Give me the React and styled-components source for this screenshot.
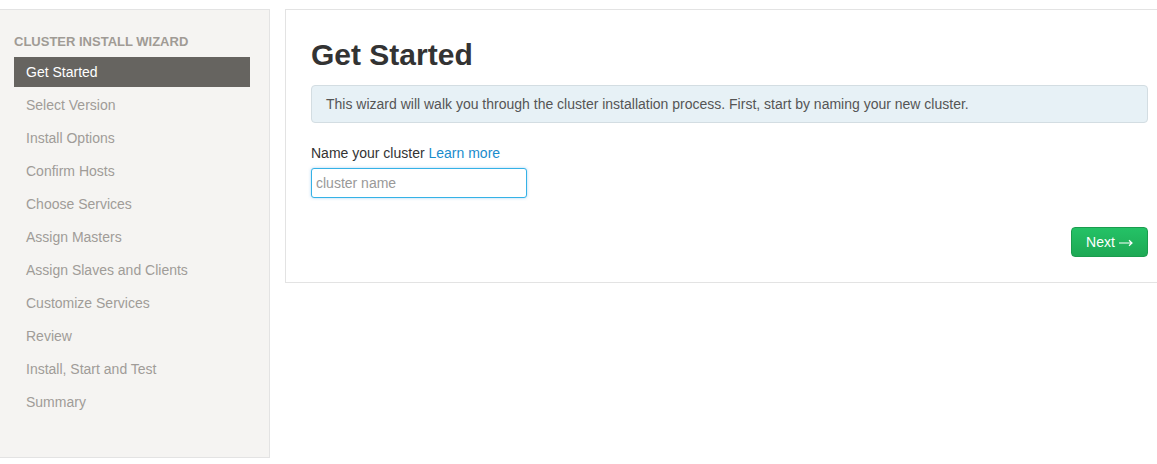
import React from "react";
import styled, { createGlobalStyle } from "styled-components";

const Global = createGlobalStyle`
  html, body { margin: 0; padding: 0; background: #fff; overflow: hidden; }
  body { font-family: "Liberation Sans", Arial, sans-serif; font-size: 14px; line-height: 20px; color: #333; }
  * { box-sizing: border-box; }
`;

const Page = styled.div`
  display: flex;
  align-items: flex-start;
  gap: 15px;
  padding-top: 9px;
  width: 1157px;
  overflow: hidden;
`;

const Sidebar = styled.nav`
  flex: 0 0 270px;
  height: 449px;
  background: #f5f4f2;
  border: 1px solid #e3e3e3;
  border-left: none;
  padding: 22px 19px 0 14px;
`;

const SideHeader = styled.div`
  font-size: 13px;
  font-weight: bold;
  line-height: 20px;
  text-transform: uppercase;
  color: #a09b95;
  margin-bottom: 5px;
`;

const NavList = styled.ul`
  list-style: none;
  margin: 0;
  padding: 0;
  display: flex;
  flex-direction: column;
  gap: 3px;
`;

const NavItem = styled.li`
  height: 30px;
  padding: 5px 12px;
  line-height: 20px;
  font-size: 14px;
  color: ${(p) => (p.$active ? "#fff" : "#a09c98")};
  background: ${(p) => (p.$active ? "#666460" : "transparent")};
`;

const Main = styled.main`
  flex: 0 0 889px;
  border: 1px solid #e3e3e3;
  padding: 25px;
  background: #fff;
`;

const Title = styled.h2`
  margin: 0 0 10px;
  font-size: 30px;
  line-height: 40px;
  font-weight: bold;
  color: #333;
`;

const Alert = styled.div`
  background: #e7f1f6;
  border: 1px solid #d3dde2;
  border-radius: 4px;
  padding: 8px 14px;
  line-height: 20px;
  color: #555;
  margin-bottom: 20px;
`;

const Label = styled.div`
  line-height: 20px;
  color: #333;
  margin-bottom: 5px;
`;

const Link = styled.a`
  color: #1a8ccc;
  text-decoration: none;
`;

const Input = styled.input`
  display: block;
  width: 216px;
  height: 30px;
  padding: 4px;
  font-family: inherit;
  font-size: 14px;
  color: #555;
  border: 1px solid #35b2e6;
  border-radius: 3px;
  outline: none;
  box-shadow: 0 0 3px rgba(82, 168, 236, 0.5);
  &::placeholder { color: #999; }
`;

const Actions = styled.div`
  display: flex;
  justify-content: flex-end;
  margin-top: 29px;
`;

const NextButton = styled.button`
  display: inline-flex;
  align-items: center;
  justify-content: center;
  gap: 4px;
  height: 30px;
  width: 77px;
  padding: 0;
  font-family: inherit;
  font-size: 14px;
  color: #fff;
  background: linear-gradient(#24c266, #1ea955);
  border: 1px solid #1b9c4e;
  border-radius: 4px;
  cursor: pointer;
`;

const Arrow = styled.svg`
  width: 14px;
  height: 8px;
  margin-top: 2px;
`;

const steps = [
  "Get Started",
  "Select Version",
  "Install Options",
  "Confirm Hosts",
  "Choose Services",
  "Assign Masters",
  "Assign Slaves and Clients",
  "Customize Services",
  "Review",
  "Install, Start and Test",
  "Summary",
];

export default function App() {
  return (
    <>
      <Global />
      <Page>
        <Sidebar>
          <SideHeader>Cluster Install Wizard</SideHeader>
          <NavList>
            {steps.map((s, i) => (
              <NavItem key={s} $active={i === 0}>{s}</NavItem>
            ))}
          </NavList>
        </Sidebar>
        <Main>
          <Title>Get Started</Title>
          <Alert>
            This wizard will walk you through the cluster installation process. First, start by naming your new cluster.
          </Alert>
          <Label>
            Name your cluster <Link href="#">Learn more</Link>
          </Label>
          <Input placeholder="cluster name" />
          <Actions>
            <NextButton>
              Next
              <Arrow viewBox="0 0 14 8" fill="none" stroke="#fff" strokeWidth="1.2">
                <path d="M0 4H13M10 1.2L13 4L10 6.8" />
              </Arrow>
            </NextButton>
          </Actions>
        </Main>
      </Page>
    </>
  );
}
